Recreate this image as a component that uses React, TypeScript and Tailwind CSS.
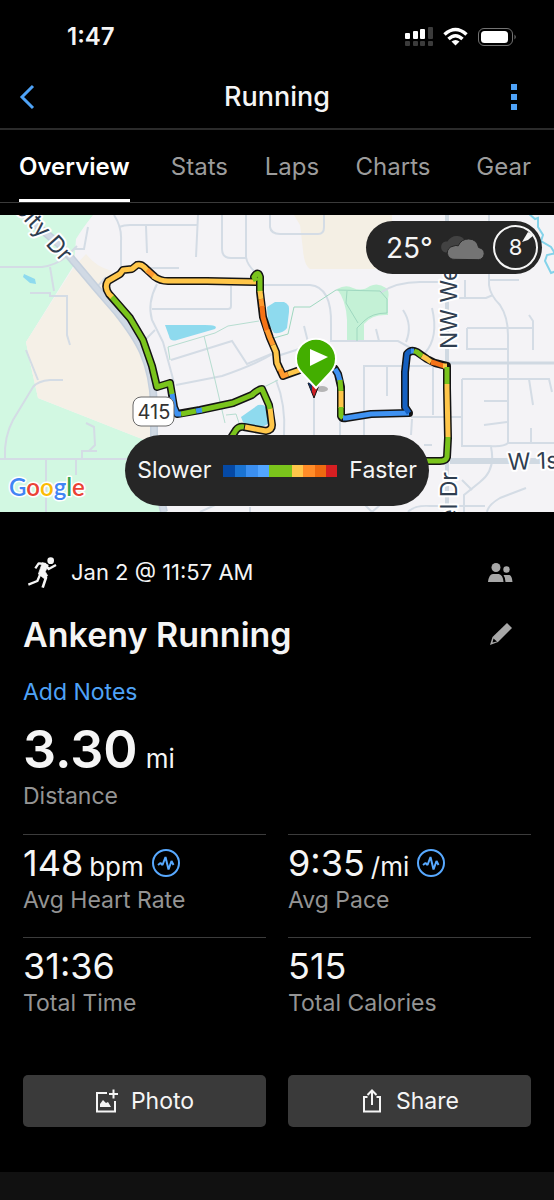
import { useState } from "react";

const tabs = ["Overview", "Stats", "Laps", "Charts", "Gear"];

const paceScale = [
  "bg-[#0549a5]",
  "bg-[#1a73d2]",
  "bg-[#3b8ff0]",
  "bg-[#52a5ff]",
  "bg-[#7ac41c]",
  "bg-[#7ac41c]",
  "bg-[#ffc64a]",
  "bg-[#ff8c28]",
  "bg-[#ee6a10]",
  "bg-[#d61f22]"
];

const stats = [
  { label: "Avg Heart Rate", value: "148", unit: "bpm", chart: true },
  { label: "Avg Pace", value: "9:35", unit: "/mi", chart: true },
  { label: "Total Time", value: "31:36" },
  { label: "Total Calories", value: "515" }
];

const green = "#7ac41c";
const yellow = "#ffc649";
const amber = "#ff9a2e";
const orange = "#f47216";
const blue = "#3f92f2";
const navy = "#1560c0";

const routeOutline = [
  "M335 154 L338 159 L341 172 L341 201 Q342 204 346 203 L371 199 L409 198 L405 192 L405 157 L407 139 Q411 134 417 137 L427 144 L435 148 L447 151 L447 173 L448 223 L447 242 Q446 246 440 246 L410 246",
  "M229 226 L236 215 Q239 211 244 212 L266 216 Q272 215 272 210 L269 190 L262 174 Q259 174 252 180 L233 188 L200 195 L177 199 L174 192 L172 180 L170 168 L157 172 L152 151 L143 125 L130 103 L109 79 Q104 72 108 66 L120 59 L123 55 L132 54 L137 50 Q141 49 144 52 L155 62 Q160 66 168 66 L207 66 L256 67 L254 62 Q258 55 260 62 L260 77 L263 102 L270 123 L276 137 L277 148 L283 161 L297 156 L308 152"
];

const routeParts = [
  { color: blue, d: "M335 154 L338 159 L340 166" },
  { color: green, d: "M340 165 L341 176" },
  { color: yellow, d: "M341 176 L341 193" },
  { color: green, d: "M341 192 L341 201 L343 203" },
  { color: blue, d: "M343 203 L346 203 L371 199 L409 198" },
  { color: navy, d: "M409 198 L405 192 L405 157 L407 139 Q409 136 412 136" },
  { color: blue, d: "M411 136 L414 136" },
  { color: green, d: "M414 136 L417 137 L422 141" },
  { color: yellow, d: "M422 141 L427 144 L431 147" },
  { color: orange, d: "M431 147 L435 148 L444 151" },
  { color: yellow, d: "M443 151 L447 151" },
  { color: green, d: "M447 152 L447 169" },
  { color: yellow, d: "M447 169 L447 173 L448 222" },
  { color: green, d: "M448 222 L447 242 Q446 246 440 246 L410 246" },
  { color: green, d: "M229 226 L236 215 Q239 211 244 212" },
  { color: yellow, d: "M245 212 L266 216 Q272 215 272 210 L270 193" },
  { color: green, d: "M270 194 L269 190 L262 174 Q259 174 252 180 L233 188 L201 195" },
  { color: blue, d: "M202 195 L196 196" },
  { color: green, d: "M196 196 L181 199" },
  { color: blue, d: "M181 199 L177 199 L174 192 L172 178" },
  { color: green, d: "M172 179 L170 168 L157 172 L152 151 L143 125 L130 103 L111 81" },
  { color: yellow, d: "M112 82 L109 79 Q104 72 108 66 L120 59 L123 55 L132 54 L137 50 Q141 49 144 52 L149 57" },
  { color: amber, d: "M147 55 L155 62" },
  { color: yellow, d: "M153 61 Q160 66 168 66 L207 66 L256 67" },
  { color: green, d: "M256 66 L254 62 Q258 55 260 62 L260 77" },
  { color: yellow, d: "M260 76 L261 84" },
  { color: amber, d: "M261 84 L262 92" },
  { color: orange, d: "M262 91 L263 102 L267 116" },
  { color: amber, d: "M267 115 L270 123 L273 130" },
  { color: yellow, d: "M273 130 L276 137 L277 148 L280 155" },
  { color: amber, d: "M280 154 L283 161 L288 159" },
  { color: yellow, d: "M288 159 L297 156 L308 152" }
];

const streets = [
  "M0 52 H42 Q56 50 66 42 L77 31",
  "M30 78 H50 V81 H67 V120 L70 130",
  "M50 52 L54 76",
  "M26 135 L38 165 M63 165 H50 Q38 166 33 172 L13 205 Q4 222 5 243",
  "M0 244 H136",
  "M46 244 V297 M76 244 V260",
  "M86 208 L94 212 L95 230 L89 236 H97 M82 243 V236 H90",
  "M114 0 Q122 12 121 26 V55",
  "M119 12 Q124 10 130 10 H198 M146 11 L147 38 M198 0 L196 42",
  "M222 0 V34 Q222 43 231 43 H246 M246 0 V42 Q247 50 256 58",
  "M270 0 V12 Q271 19 280 19 H318 Q324 19 324 12 V0",
  "M140 53 H179 M75 34 H84 L88 12",
  "M97 72 L106 62",
  "M157 69 Q147 88 152 105 L163 127 L172 160 L174 168",
  "M152 94 H228 Q231 94 231 91 V71",
  "M171 145 L232 126 L247 149 L276 137",
  "M176 170 L222 161 Q255 150 276 137",
  "M146 124 L155 115",
  "M256 70 H310 Q332 72 331 110 V126 H398 L420 138",
  "M274 142 Q284 139 299 134",
  "M304 111 L308 127 M376 114 L379 126 M403 95 Q413 110 406 127",
  "M432 93 Q439 122 425 138",
  "M380 78 Q396 67 420 67 H440",
  "M465 65 V82 M459 83 H486 L493 80",
  "M489 0 V70 Q490 80 500 90 Q508 102 508 120 V228",
  "M490 65 H519 M467 113 V134 H508 M467 113 H533 M529 100 L533 106 V135",
  "M364 221 V151 H447 M387 152 V181 M433 151 V200",
  "M462 164 H549 L552 177 M462 164 V231 H490 Q504 232 508 228 H554",
  "M411 202 H462 M364 203 V220 M412 204 L411 220 M424 230 H432",
  "M529 164 L533 190 M484 186 H507 M484 210 L507 207 M531 213 V229",
  "M491 232 Q496 255 480 267 L464 280 V297",
  "M462 265 L472 275 M526 273 L500 283 Q488 290 487 297",
  "M408 297 Q414 290 430 291 H485",
  "M276 165 Q286 190 284 220 M314 178 V220 M340 204 V220",
  "M200 297 L215 290 M250 292 V297 M365 290 L372 297 L380 290"
];

function RouteMap() {
  return (
    <svg viewBox="0 0 554 297" preserveAspectRatio="xMidYMid slice" className="block h-[297px] w-full" role="img" aria-label="Route map">
      <rect width="554" height="297" fill="#f4f3f6" />
      <path d="M0 0 H93 Q82 14 76 24 L74 50 L26 127 L30 147 L38 183 L137 222 L153 228 L167 297 H0 Z" fill="#d2f8e2" />
      <path d="M86 39 Q96 52 112 56 L106 74 L140 125 L152 160 V228 L38 183 L30 147 L26 127 L74 52 Z" fill="#f5f0e7" />
      <path d="M294 0 H392 V54 H310 Q304 50 303 35 L300 10 Z" fill="#f4efe4" />
      <path d="M337 74 Q346 69 353 73 Q362 77 370 71 Q378 67 386 73 Q390 76 388 84 V100 Q372 99 364 109 V127 H347 V105 Q346 85 337 74 Z" fill="#c4f1d6" />

      <g fill="none" stroke="#d4dce5" strokeWidth="2">
        {streets.map((d) => (
          <path key={d} d={d} />
        ))}
      </g>
      <g fill="none" stroke="#d0d9e2">
        <path d="M447 0 V297" strokeWidth="4" />
        <path d="M450 246 H554" strokeWidth="6" />
        <path d="M447 148 H554" strokeWidth="3" />
        <path d="M17 -6 L60 30 L97 74 L117 97 Q136 121 143 137 Q153 160 154 190 V220 Q154 260 164 297" stroke="#c5d0dd" strokeWidth="8" />
        <path d="M17 -6 L60 30 L97 74 L117 97 Q136 121 143 137 Q153 160 154 190 V220 Q154 260 164 297" stroke="#d0d9e4" strokeWidth="5" />
      </g>
      <g fill="none" stroke="#b6ddd0" strokeWidth="1">
        <path d="M259 106 L228 111 L215 118 L168 132 L170 145 M204 121 L215 165 L225 208 M226 200 L236 199 L240 211" />
        <path d="M274 123 L288 119 L294 92 H310 L336 75 L380 76 L387 84 V98 Q372 98 364 106 L357 113 V126 M347 76 L346 88 L358 108" stroke="#9fd8c0" />
        <path d="M262 173 L278 165" />
      </g>
      <path d="M165 110 H205 Q219 110 215 114 L177 125 Q170 127 169 121 Z" fill="#8edaee" />
      <path d="M267 92 L275 87 H284 Q290 89 289 97 L287 113 Q283 119 274 118 L268 108 Z" fill="#8edaee" />
      <path d="M241 202 L258 190 Q267 188 268 198 V209 L262 212 Q248 212 243 207 Z" fill="#8edaee" />
      <path d="M24 59 L35 64 L36 69 L30 68 L23 62 Z" fill="#8edaee" />
      <path d="M528 -2 L535 4 L538 3 L538 12 L543 20 L541 26 L551 32 L556 40 M556 38 L547 40 L545 46 L551 58 L556 56" fill="none" stroke="#84d3ea" strokeWidth="2" />

      <g fontFamily="Inter, sans-serif" fontSize="23" fill="#2f3e50" stroke="#ffffff" strokeWidth="4" strokeLinejoin="round" paintOrder="stroke">
        <text transform="translate(62 48) rotate(48)" textAnchor="end">
          City Dr
        </text>
        <text transform="translate(457 134) rotate(-90)">NW Weigel</text>
        <text transform="translate(457 257) rotate(-90)" textAnchor="end">
          Weigel Dr
        </text>
        <text transform="translate(508 255) rotate(-2)">W 1st St</text>
      </g>

      <ellipse cx="322" cy="174" rx="6" ry="3" fill="#9a9a9a" opacity="0.7" />
      <path d="M308 168 L314 183 L319 170 Z" fill="#cf1f24" stroke="#111111" strokeLinejoin="round" />
      <path d="M308 168 L312 178 V168 Z" fill="#16335e" />
      <g fill="none" stroke="#141414" strokeWidth="8" strokeLinejoin="round" strokeLinecap="round">
        {routeOutline.map((d) => (
          <path key={d} d={d} />
        ))}
      </g>
      <g fill="none" strokeWidth="5" strokeLinejoin="round">
        {routeParts.map((part) => (
          <path key={part.d} d={part.d} stroke={part.color} />
        ))}
      </g>

      <rect x="133" y="182" width="41" height="29" rx="8" fill="#ffffff" stroke="#686868" strokeWidth="1" />
      <text x="154" y="204" textAnchor="middle" fontFamily="Inter, sans-serif" fontSize="20" fill="#333333">
        415
      </text>

      <path d="M316 173 L302 158 A20 20 0 1 1 330 158 Z" fill="#43ae00" stroke="#ffffff" strokeWidth="2" />
      <path d="M310 134 L328 142 L310 151 Z" fill="#ffffff" />

      <text x="9" y="281" fontFamily="Lato, sans-serif" fontSize="24" fontWeight="600" stroke="#ffffff" strokeWidth="3" strokeLinejoin="round" paintOrder="stroke">
        <tspan fill="#4285f4">G</tspan>
        <tspan fill="#ea4335">o</tspan>
        <tspan fill="#fbbc05">o</tspan>
        <tspan fill="#4285f4">g</tspan>
        <tspan fill="#34a853">l</tspan>
        <tspan fill="#ea4335">e</tspan>
      </text>
    </svg>
  );
}

function StatusIcons() {
  return (
    <svg viewBox="0 0 112 20" className="h-5 w-28" aria-hidden="true">
      <g fill="#ffffff">
        <rect x="0" y="6" width="5" height="6" rx="1" />
        <rect x="8" y="4" width="5" height="8" rx="1" />
        <rect x="15" y="2" width="5" height="10" rx="1" />
      </g>
      <g fill="#3b3b3b">
        <rect x="23" y="0" width="5" height="12" rx="1" />
        <rect x="0" y="14" width="5" height="5" rx="1" />
        <rect x="8" y="14" width="5" height="5" rx="1" />
        <rect x="15" y="14" width="5" height="5" rx="1" />
        <rect x="23" y="14" width="5" height="5" rx="1" />
      </g>
      <g fill="none" stroke="#ffffff" strokeWidth="3.500">
        <path d="M39.500 7.500 Q50.500 -2.500 61.500 7.500" />
        <path d="M43.500 12 Q50.500 5.500 57.500 12" />
      </g>
      <path d="M46.500 14.500 Q50.500 11.500 54.500 14.500 L50.500 18.500 Z" fill="#ffffff" />
      <rect x="73.500" y="1.500" width="34" height="17" rx="5.500" fill="none" stroke="#737373" />
      <rect x="76" y="4" width="27" height="12" rx="3.500" fill="#ffffff" />
      <path d="M109.500 7.500 Q112 10 109.500 12.500 Z" fill="#737373" />
    </svg>
  );
}

function RunnerIcon() {
  return (
    <svg viewBox="0 0 96 99" className="h-[33px] w-8" fill="none" stroke="#f5f5f5" strokeLinejoin="round" aria-hidden="true">
      <circle cx="71" cy="14" r="10" fill="#f5f5f5" stroke="none" />
      <path d="M25 37 L35 22 L54 24 L65 39 L87 27" strokeWidth="7" />
      <path d="M46 20 L64 27 L55 47 L62 59 L52 68 L34 54 Z" fill="#f5f5f5" strokeWidth="2" />
      <path d="M46 54 L57 65 L47 95" strokeWidth="8" />
      <path d="M40 54 L31 75 L4 86" strokeWidth="7" />
    </svg>
  );
}

function PulseIcon() {
  return (
    <svg viewBox="0 0 28 28" className="size-7" fill="none" stroke="#58a9ff" aria-hidden="true">
      <circle cx="14" cy="14" r="13" strokeWidth="2" />
      <path d="M6 16 L8.500 14 L10.500 16 L13.500 8 L16.500 20.500 L19.500 12 L21.500 16" strokeWidth="2" strokeLinejoin="bevel" />
    </svg>
  );
}

function CloudIcon() {
  return (
    <svg viewBox="0 0 136 76" className="h-[25px] w-[45px]" aria-hidden="true">
      <path d="M16 53 A17 17 0 0 1 16 20 H22 Q32 2 53 3 Q70 4 76 18 L60 50 Z" fill="#424242" />
      <path d="M44 74 A20 20 0 0 1 40 34 Q48 30 55 33 Q64 12 87 12 Q112 13 117 38 Q134 42 134 57 Q132 74 116 75 Z" fill="#747474" stroke="#262626" strokeWidth="3" />
    </svg>
  );
}

export default function App() {
  const [active, setActive] = useState("Overview");

  return (
    <main className="flex min-h-screen flex-col bg-black font-['Inter',sans-serif] text-[#f5f5f5]">
      <div className="flex h-[74px] items-center justify-between pl-[67px] pr-[37px]">
        <span className="text-2xl font-semibold">1:47</span>
        <StatusIcons />
      </div>

      <header className="grid h-14 grid-cols-[1fr_auto_1fr] items-center border-b-2 border-[#2b2b2b] pb-2 px-[19px]">
        <button type="button" aria-label="Back" className="w-6">
          <svg viewBox="0 0 16 26" className="h-[26px] w-4" fill="none" stroke="#4fa3f7" strokeWidth="3" aria-hidden="true">
            <path d="M14 2 L3 13 L14 24" />
          </svg>
        </button>
        <h1 className="text-[27px] font-medium leading-9">Running</h1>
        <button type="button" aria-label="More options" className="mr-[18px] flex w-6 flex-col items-end gap-1 justify-self-end">
          <span className="size-[6px] bg-[#4fa3f7]" />
          <span className="size-[6px] bg-[#4fa3f7]" />
          <span className="size-[6px] bg-[#4fa3f7]" />
        </button>
      </header>

      <nav className="grid h-[73px] grid-cols-[152fr_94fr_91fr_121fr_54fr] justify-items-start border-b border-[#3a3a3a] pl-[19px] pr-[23px]">
        {tabs.map((tab) => (
          <button
            key={tab}
            type="button"
            onClick={() => setActive(tab)}
            className={
              tab === active
                ? "border-b-[3px] border-white pt-1 text-2xl font-semibold text-white"
                : "border-b-[3px] border-transparent pt-1 text-2xl text-[#9c9c9c]"
            }
          >
            {tab}
          </button>
        ))}
      </nav>

      <section className="relative mt-3">
        <RouteMap />
        <div className="absolute right-3 top-[6px] flex h-[53px] w-44 items-center justify-between rounded-full bg-[#262626] pl-5 pr-1">
          <span className="text-[28px]">25°</span>
          <CloudIcon />
          <span className="relative flex size-[45px] items-center justify-center rounded-full border-2 border-[#f5f5f5] text-[22px]">
            8
            <svg viewBox="0 0 12 12" className="absolute right-[2px] top-1 size-3" aria-hidden="true">
              <path d="M6 1 L12 4 L6 9 L0 11 Z" fill="#f5f5f5" />
            </svg>
          </span>
        </div>
        <div className="absolute inset-x-0 bottom-[6px] flex justify-center">
          <div className="flex h-[71px] w-[304px] items-center justify-center gap-3 rounded-full bg-[#262626] text-[23px]">
            <span>Slower</span>
            <div className="flex h-3 w-[114px]">
              {paceScale.map((color, i) => (
                <span key={i} className={`flex-1 ${color}`} />
              ))}
            </div>
            <span>Faster</span>
          </div>
        </div>
      </section>

      <section className="px-[23px] pt-10">
        <div className="flex h-10 items-center justify-between pr-[18px]">
          <div className="flex items-center gap-3 pl-1">
            <RunnerIcon />
            <span className="text-[22px]">Jan 2 @ 11:57 AM</span>
          </div>
          <svg viewBox="0 0 25 19" className="h-[19px] w-[25px]" fill="#a8a8a8" aria-hidden="true">
            <circle cx="8" cy="4.500" r="4.500" />
            <circle cx="18.500" cy="6.500" r="3.200" />
            <path d="M0 19 Q1 11 5 11 H11 Q15 12 15.500 19 Z" />
            <path d="M15.500 12 H21.500 Q24 13 24.500 19 H17.500 Q17.500 15 15.500 12 Z" />
          </svg>
        </div>

        <div className="mt-5 flex h-11 items-center justify-between pr-[18px]">
          <h2 className="text-[34px] font-semibold">Ankeny Running</h2>
          <button type="button" aria-label="Edit title">
            <svg viewBox="0 0 24 24" className="size-6" aria-hidden="true">
              <path d="M18 1 L23 6 L9 20 L1 23 L3.500 15 Z" fill="#a8a8a8" />
              <path d="M4.500 16.500 L8 19.500 L3.500 20.500 Z" fill="#000000" />
            </svg>
          </button>
        </div>

        <button type="button" className="mt-[22px] block text-[23px] leading-7 text-[#4fa3f7]">
          Add Notes
        </button>

        <p className="mt-3 flex h-16 items-baseline gap-2 text-[52px] font-semibold leading-[64px]">
          3.30
          <span className="text-[26px] font-normal leading-8">mi</span>
        </p>
        <p className="text-[23px] leading-7 text-[#949494]">Distance</p>

        <dl className="mt-6 grid grid-cols-2 gap-x-[22px]">
          {stats.map((stat) => (
            <div key={stat.label} className="flex flex-col-reverse border-t border-[#3c3c3c] pb-[23px] pt-[6px]">
              <dt className="mt-px text-[23px] leading-7 text-[#949494]">{stat.label}</dt>
              <dd className="flex h-11 items-center gap-2">
                <span className="flex items-baseline gap-[6px] text-[36px] leading-[44px]">
                  {stat.value}
                  {stat.unit && <span className="text-[26px] leading-8">{stat.unit}</span>}
                </span>
                {stat.chart && <PulseIcon />}
              </dd>
            </div>
          ))}
        </dl>

        <div className="mt-[35px] grid grid-cols-2 gap-x-[22px]">
          <button type="button" className="flex h-13 items-center justify-center gap-3 rounded-[5px] bg-[#3a3a3a] text-[23px]">
            <svg viewBox="0 0 24 24" className="size-6" fill="none" stroke="#f5f5f5" strokeWidth="2" aria-hidden="true">
              <path d="M12 4 H2 V22.500 H20 V12" />
              <path d="M14 5 H23 M18.500 0.500 V9.500" />
              <path d="M5 18 V15 L8 11 L11 14 L13 13 L16 18 Z" fill="#f5f5f5" stroke="none" />
            </svg>
            Photo
          </button>
          <button type="button" className="flex h-13 items-center justify-center gap-3 rounded-[5px] bg-[#3a3a3a] text-[23px]">
            <svg viewBox="0 0 24 24" className="size-6" fill="none" stroke="#f5f5f5" strokeWidth="2" aria-hidden="true">
              <path d="M7.500 8 H4 V22.500 H20 V8 H16.500" />
              <path d="M12 16 V2 M7.500 6 L12 1.500 L16.500 6" />
            </svg>
            Share
          </button>
        </div>
      </section>

      <div className="mt-[45px] min-h-7 flex-1 bg-[#111111]" />
    </main>
  );
}
